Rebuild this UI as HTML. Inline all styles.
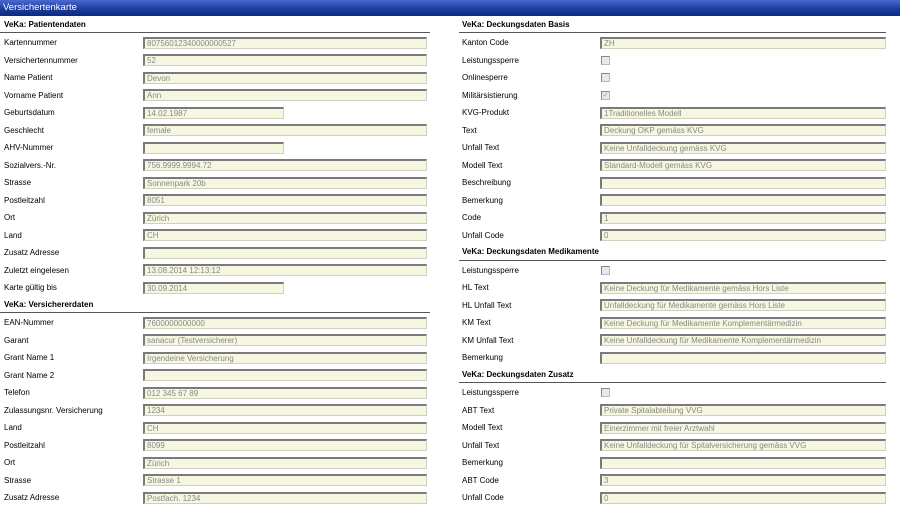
<!DOCTYPE html>
<html><head><meta charset="utf-8"><style>
*{box-sizing:border-box;margin:0;padding:0}
body{width:900px;height:515px;background:#fff;font-family:"Liberation Sans",Arial,sans-serif;font-size:8px;color:#000;overflow:hidden;position:relative}
.hdr{position:absolute;left:0;top:0;width:900px;height:16px;background:linear-gradient(#4a6ad0,#1b3a9c 60%,#0d2a80);color:#fff;font-size:9.5px;padding:2px 0 0 3px}
.col{position:absolute;top:15.5px}
.l{left:0;width:430px}
.r{left:459px;width:427px}
.row{height:17.5px;position:relative}
.row .lb{position:absolute;left:4px;top:5px}
.r .row .lb{left:3px}
.sec{font-weight:bold;border-bottom:1px solid #555}
.sec .lb{top:4px}
.in{position:absolute;left:143px;top:3.5px;height:12px;width:284px;background:#f7f7e1;border:1px solid #d0d0c0;border-top:2px solid #7a7a7a;border-left:2px solid #7a7a7a;color:#888;padding:0 0 0 2px;line-height:9px;font-size:8px;white-space:nowrap;overflow:hidden}
.r .in{left:141px;width:286px}
.s{width:141px}
.cb{position:absolute;left:142px;top:5px;width:9px;height:9px;border:1px solid #bbb;border-top-color:#888;border-left-color:#888;background:#e8e8e8;font-size:7px;line-height:7px;color:#999;text-align:center}
</style></head><body>
<div class="hdr">Versichertenkarte</div>
<div class="col l">
<div class="row sec"><span class="lb">VeKa: Patientendaten</span></div>
<div class="row"><span class="lb">Kartennummer</span><div class="in">80756012340000000527</div></div>
<div class="row"><span class="lb">Versichertennummer</span><div class="in">52</div></div>
<div class="row"><span class="lb">Name Patient</span><div class="in">Devon</div></div>
<div class="row"><span class="lb">Vorname Patient</span><div class="in">Ann</div></div>
<div class="row"><span class="lb">Geburtsdatum</span><div class="in s">14.02.1987</div></div>
<div class="row"><span class="lb">Geschlecht</span><div class="in">female</div></div>
<div class="row"><span class="lb">AHV-Nummer</span><div class="in s"></div></div>
<div class="row"><span class="lb">Sozialvers.-Nr.</span><div class="in">756.9999.9994.72</div></div>
<div class="row"><span class="lb">Strasse</span><div class="in">Sonnenpark 20b</div></div>
<div class="row"><span class="lb">Postleitzahl</span><div class="in">8051</div></div>
<div class="row"><span class="lb">Ort</span><div class="in">Zürich</div></div>
<div class="row"><span class="lb">Land</span><div class="in">CH</div></div>
<div class="row"><span class="lb">Zusatz Adresse</span><div class="in"></div></div>
<div class="row"><span class="lb">Zuletzt eingelesen</span><div class="in">13.08.2014 12:13:12</div></div>
<div class="row"><span class="lb">Karte gültig bis</span><div class="in s">30.09.2014</div></div>
<div class="row sec"><span class="lb">VeKa: Versichererdaten</span></div>
<div class="row"><span class="lb">EAN-Nummer</span><div class="in">7600000000000</div></div>
<div class="row"><span class="lb">Garant</span><div class="in">sanacur (Testversicherer)</div></div>
<div class="row"><span class="lb">Grant Name 1</span><div class="in">Irgendeine Versicherung</div></div>
<div class="row"><span class="lb">Grant Name 2</span><div class="in"></div></div>
<div class="row"><span class="lb">Telefon</span><div class="in">012 345 67 89</div></div>
<div class="row"><span class="lb">Zulassungsnr. Versicherung</span><div class="in">1234</div></div>
<div class="row"><span class="lb">Land</span><div class="in">CH</div></div>
<div class="row"><span class="lb">Postleitzahl</span><div class="in">8099</div></div>
<div class="row"><span class="lb">Ort</span><div class="in">Zürich</div></div>
<div class="row"><span class="lb">Strasse</span><div class="in">Strasse 1</div></div>
<div class="row"><span class="lb">Zusatz Adresse</span><div class="in">Postfach. 1234</div></div>
</div>
<div class="col r">
<div class="row sec"><span class="lb">VeKa: Deckungsdaten Basis</span></div>
<div class="row"><span class="lb">Kanton Code</span><div class="in">ZH</div></div>
<div class="row"><span class="lb">Leistungssperre</span><div class="cb"></div></div>
<div class="row"><span class="lb">Onlinesperre</span><div class="cb"></div></div>
<div class="row"><span class="lb">Militärsistierung</span><div class="cb">✓</div></div>
<div class="row"><span class="lb">KVG-Produkt</span><div class="in">1Traditionelles Modell</div></div>
<div class="row"><span class="lb">Text</span><div class="in">Deckung OKP gemäss KVG</div></div>
<div class="row"><span class="lb">Unfall Text</span><div class="in">Keine Unfalldeckung gemäss KVG</div></div>
<div class="row"><span class="lb">Modell Text</span><div class="in">Standard-Modell gemäss KVG</div></div>
<div class="row"><span class="lb">Beschreibung</span><div class="in"></div></div>
<div class="row"><span class="lb">Bemerkung</span><div class="in"></div></div>
<div class="row"><span class="lb">Code</span><div class="in">1</div></div>
<div class="row"><span class="lb">Unfall Code</span><div class="in">0</div></div>
<div class="row sec"><span class="lb">VeKa: Deckungsdaten Medikamente</span></div>
<div class="row"><span class="lb">Leistungssperre</span><div class="cb"></div></div>
<div class="row"><span class="lb">HL Text</span><div class="in">Keine Deckung für Medikamente gemäss Hors Liste</div></div>
<div class="row"><span class="lb">HL Unfall Text</span><div class="in">Unfalldeckung für Medikamente gemäss Hors Liste</div></div>
<div class="row"><span class="lb">KM Text</span><div class="in">Keine Deckung für Medikamente Komplementärmedizin</div></div>
<div class="row"><span class="lb">KM Unfall Text</span><div class="in">Keine Unfalldeckung für Medikamente Komplementärmedizin</div></div>
<div class="row"><span class="lb">Bemerkung</span><div class="in"></div></div>
<div class="row sec"><span class="lb">VeKa: Deckungsdaten Zusatz</span></div>
<div class="row"><span class="lb">Leistungssperre</span><div class="cb"></div></div>
<div class="row"><span class="lb">ABT Text</span><div class="in">Private Spitalabteilung VVG</div></div>
<div class="row"><span class="lb">Modell Text</span><div class="in">Einerzimmer mit freier Arztwahl</div></div>
<div class="row"><span class="lb">Unfall Text</span><div class="in">Keine Unfalldeckung für Spitalversicherung gemäss VVG</div></div>
<div class="row"><span class="lb">Bemerkung</span><div class="in"></div></div>
<div class="row"><span class="lb">ABT Code</span><div class="in">3</div></div>
<div class="row"><span class="lb">Unfall Code</span><div class="in">0</div></div>
</div>
</body></html>
